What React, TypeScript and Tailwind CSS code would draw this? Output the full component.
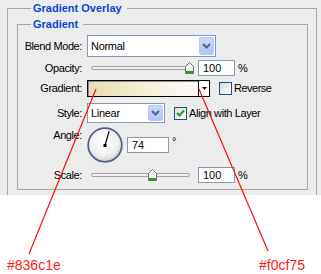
import React from "react";

function Chevron() {
  return (
    <svg width="9" height="6" viewBox="0 0 9 6">
      <path d="M1 1 L4.5 4.5 L8 1" fill="none" stroke="#4d6185" strokeWidth="2" />
    </svg>
  );
}

function Select({ value, w, h }: { value: string; w: string; h: string }) {
  return (
    <div className={`${w} ${h} border border-[#7f9db9] bg-white flex items-stretch p-px`}>
      <span className="flex-1 flex items-center pl-[2px] text-[11px] tracking-[-0.3px] text-black">{value}</span>
      <span className="w-[15px] rounded-[2px] border border-[#b6c9f5] bg-gradient-to-b from-[#cad8fc] to-[#b1c5f6] flex items-center justify-center">
        <Chevron />
      </span>
    </div>
  );
}

function Thumb() {
  return (
    <svg width="9" height="12" viewBox="0 0 9 12">
      <path d="M0.5 11.5 V4.5 L4.5 0.5 L8.5 4.5 V11.5 Z" fill="#f3f3f1" stroke="#6f6f6f" />
      <rect x="1" y="9" width="7" height="2" fill="#22a722" />
    </svg>
  );
}

function Slider({ pos }: { pos: number }) {
  return (
    <div className="relative ml-[4px] w-[107px] h-[16px] flex items-center">
      <div className="w-[99px] h-[4px] rounded-full border border-[#a4a39c] bg-[#f1f1ef]" />
      <div className="absolute top-[2px]" style={{ left: pos }}>
        <Thumb />
      </div>
    </div>
  );
}

function NumInput({ value, w }: { value: string; w: string }) {
  return (
    <div className={`${w} h-[16px] border border-[#7f9db9] bg-white flex items-center pl-[4px] text-[11px] text-black`}>
      {value}
    </div>
  );
}

function Checkbox({ checked }: { checked?: boolean }) {
  return (
    <div className="w-[13px] h-[13px] border border-[#1c5180] bg-gradient-to-br from-[#dcdcd7] to-white flex items-center justify-center">
      {checked && (
        <svg width="9" height="9" viewBox="0 0 9 9">
          <path d="M1 4 L3.5 6.5 L8 1.5" fill="none" stroke="#21a121" strokeWidth="2" />
        </svg>
      )}
    </div>
  );
}

function Label({ children }: { children: React.ReactNode }) {
  return (
    <div className="w-[64px] text-right text-[11px] leading-[13px] tracking-[-0.4px] text-black shrink-0 whitespace-nowrap">
      {children}
    </div>
  );
}

function Title({ children, ml }: { children: React.ReactNode; ml: string }) {
  return (
    <div
      className={`${ml} -mt-[8px] w-fit pl-[2px] pr-[5px] bg-[#ececec] text-[11px] leading-[15px] font-bold text-[#0a46d5]`}
    >
      {children}
    </div>
  );
}

function Dial() {
  const a = (74 * Math.PI) / 180;
  const cx = 18;
  const cy = 18.5;
  const r = 15;
  return (
    <svg width="36" height="36" viewBox="0 0 36 36">
      <defs>
        <radialGradient id="dg" cx="45%" cy="40%" r="60%">
          <stop offset="0%" stopColor="#ffffff" />
          <stop offset="70%" stopColor="#f0f0ee" />
          <stop offset="100%" stopColor="#cfcfcf" />
        </radialGradient>
      </defs>
      <circle cx="18" cy="18" r="16.8" fill="url(#dg)" stroke="#53628a" strokeWidth="1.8" />
      <line x1={cx} y1={cy} x2={cx + r * Math.cos(a)} y2={cy - r * Math.sin(a)} stroke="#000" strokeWidth="1.2" />
      <rect x="16.5" y="17" width="3" height="3" fill="#000" />
    </svg>
  );
}

export default function App() {
  return (
    <div className="relative w-[321px] h-[274px] bg-white overflow-hidden font-['Liberation_Sans',Arial,sans-serif]">
      <div className="h-[195px] bg-[#ececec] pl-[7px] pr-[4px] pt-[8px] overflow-hidden">
        <div className="border border-b-0 border-[#aca899] pl-[9px] pr-[8px] min-h-[220px]">
          <Title ml="ml-[14px]">Gradient Overlay</Title>
          <div className="mt-[8px] border border-[#aca899] pb-[6px]">
            <Title ml="ml-[13px]">Gradient</Title>

            <div className="flex items-center mt-[3px] h-[22px]">
              <Label>Blend Mode:</Label>
              <div className="ml-[5px]">
                <Select value="Normal" w="w-[129px]" h="h-[22px]" />
              </div>
            </div>

            <div className="flex items-center mt-[3px] h-[16px]">
              <Label>Opacity:</Label>
              <div className="ml-[5px] flex items-center">
                <Slider pos={94} />
                <NumInput value="100" w="w-[37px]" />
                <span className="ml-[3px] text-[11px] text-black">%</span>
              </div>
            </div>

            <div className="flex items-center mt-[4px] h-[17px]">
              <Label>Gradient:</Label>
              <div className="ml-[5px] flex items-center">
                <div className="w-[123px] h-[17px] border border-black flex">
                  <div className="flex-1 bg-gradient-to-r from-[#e9dbb2] to-[#fefdfa] shadow-[inset_1px_1px_0_#8c8c8c]" />
                  <div className="w-[11px] border-l border-black bg-white flex items-center justify-center">
                    <svg width="5" height="3" viewBox="0 0 5 3">
                      <path d="M0 0 H5 L2.5 3 Z" fill="#000" />
                    </svg>
                  </div>
                </div>
                <div className="ml-[9px]">
                  <Checkbox />
                </div>
                <span className="ml-[2px] text-[11px] tracking-[-0.5px] text-black">Reverse</span>
              </div>
            </div>

            <div className="flex items-center mt-[6px] h-[20px]">
              <Label>Style:</Label>
              <div className="ml-[5px] flex items-center">
                <Select value="Linear" w="w-[78px]" h="h-[20px]" />
                <div className="ml-[9px]">
                  <Checkbox checked />
                </div>
                <span className="ml-[2px] text-[11px] tracking-[-0.4px] text-black">Align with Layer</span>
              </div>
            </div>

            <div className="flex items-start mt-[4px] h-[36px]">
              <div className="pt-[2px]">
                <Label>Angle:</Label>
              </div>
              <div className="ml-[5px] flex items-center h-[36px]">
                <Dial />
                <div className="ml-[4px]">
                  <NumInput value="74" w="w-[42px]" />
                </div>
                <span className="ml-[3px] self-start mt-[8px] text-[11px] leading-[13px] text-black">°</span>
              </div>
            </div>

            <div className="flex items-center mt-[4px] h-[16px]">
              <Label>Scale:</Label>
              <div className="ml-[5px] flex items-center">
                <Slider pos={57} />
                <NumInput value="100" w="w-[37px]" />
                <span className="ml-[3px] text-[11px] text-black">%</span>
              </div>
            </div>
          </div>
        </div>
      </div>

      <div className="flex pt-[62px] text-[14px] leading-[16px] text-[#ff1a1a]">
        <span className="ml-[7px]">#836c1e</span>
        <span className="ml-auto mr-[16px]">#f0cf75</span>
      </div>

      <svg className="absolute inset-0 pointer-events-none" width="321" height="274" viewBox="0 0 321 274">
        <line x1="96" y1="89" x2="29" y2="254" stroke="#ff1010" strokeWidth="1.2" />
        <line x1="199" y1="89" x2="268" y2="251" stroke="#ff1010" strokeWidth="1.2" />
      </svg>
    </div>
  );
}
